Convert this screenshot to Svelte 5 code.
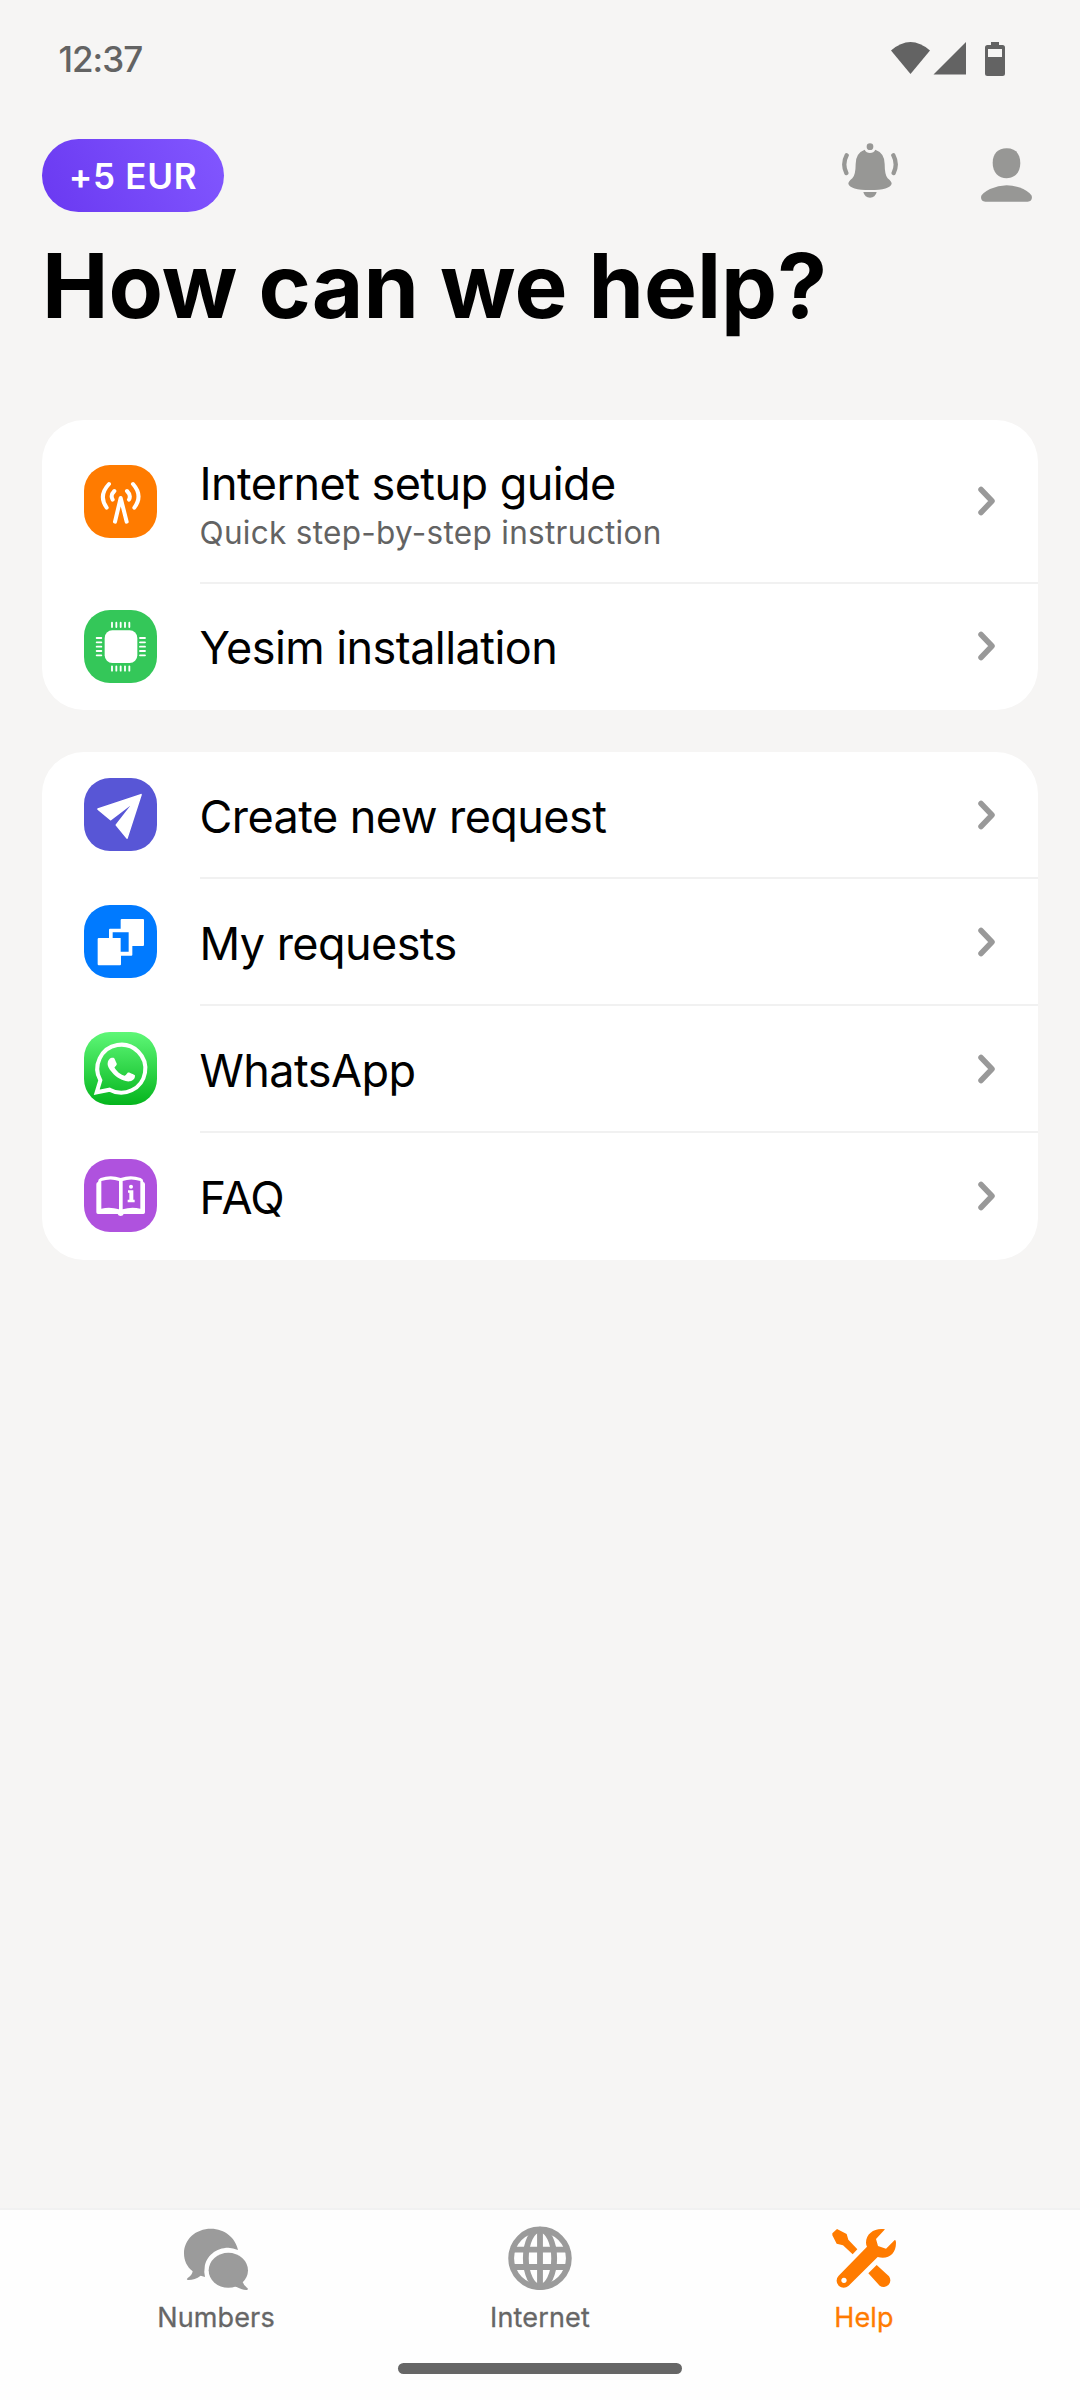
<script>
  const groups = [
    [
      { id: 'guide', title: 'Internet setup guide', note: 'Quick step-by-step instruction' },
      { id: 'chip', title: 'Yesim installation' }
    ],
    [
      { id: 'send', title: 'Create new request' },
      { id: 'requests', title: 'My requests' },
      { id: 'whatsapp', title: 'WhatsApp' },
      { id: 'faq', title: 'FAQ' }
    ]
  ];
  const pins = [84, 97, 110, 123, 136];
  const tabs = [
    { id: 'numbers', label: 'Numbers' },
    { id: 'internet', label: 'Internet' },
    { id: 'help', label: 'Help', active: true }
  ];
</script>

<div class="screen">
  <div class="status">
    <span class="clock">12:37</span>
    <svg class="signals" viewBox="0 0 116 36" aria-hidden="true">
      <path d="M0 9.5Q19.500-7.500 39 9.500L19.500 33Z" />
      <path d="M42.500 33.500L75 1V33.500Z" />
      <path fill-rule="evenodd" d="M100 1h8v3h3.500q2.500 0 2.500 2.500v26q0 2.500-2.500 2.500h-15q-2.500 0-2.500-2.500v-26Q94 4 96.500 4H100ZM97 8v8h14V8Z" />
    </svg>
  </div>

  <header>
    <button class="bonus">+5 EUR</button>
    <div class="actions">
      <svg class="bell" viewBox="0 0 180 180" aria-label="Notifications">
        <circle cx="90" cy="20" r="10" />
        <path d="M74 29A18 18 0 0 0 106 29Q134 39 134 72Q134 105 143 115Q155 125 155 131Q150 150 90 150Q30 150 25 131Q25 125 37 115Q47 105 47 72Q47 39 74 29Z" />
        <path d="M70 156H110Q106 173 90 173Q74 173 70 156Z" />
        <path class="wave" d="M20 46Q6 72 19 99M160 46Q174 72 161 99" />
      </svg>
      <svg class="person" viewBox="0 0 160 168" aria-label="Profile">
        <path d="M80 4C106 4 121 20 121 48C121 76 104 94 80 94C56 94 38 76 38 48C38 20 54 4 80 4Z" />
        <path d="M3 150Q3 140 30 126Q55 115 80 115Q105 115 130 126Q156 140 156 150Q156 164 143 164H16Q3 164 3 150Z" />
      </svg>
    </div>
  </header>

  <h1>How can we help?</h1>

  <main>
    {#each groups as group}
      <section class="card">
        {#each group as item}
          <div class="row" class:tall={item.note}>
            <svg class="tile {item.id}" viewBox="0 0 219 219" aria-hidden="true">
              {#if item.id === 'guide'}
                <path class="line" d="M93 170L110 99L128 170M91 78Q78 91 86 104M129 78Q142 91 135 104M75 57Q42 92 68 128M147 57Q178 92 151 128" />
              {:else if item.id === 'chip'}
                <rect x="62" y="61" width="98" height="98" rx="23" />
                {#each pins as p}
                  <path class="pin" d="M{p} 38V51M{p} 169V182M38 {p}H52M168 {p}H183" />
                {/each}
              {:else if item.id === 'send'}
                <path class="soft" d="M171 50L42 93L80 125L153 69L97 141L129 180Z" />
              {:else if item.id === 'requests'}
                <rect x="110" y="42" width="70" height="81" rx="3" />
                <rect x="75" y="71" width="70" height="81" rx="3" />
                <rect x="41" y="99" width="70" height="82" rx="3" />
                <path class="cut" d="M86 82H134V140H110V99H86Z" />
              {:else if item.id === 'whatsapp'}
                <path class="ring" d="M38 181L49 145A72 72 0 1 1 77 173Z" />
                <path transform="translate(30 36.500) scale(6.800 6.350)" d="M17.472 14.382c-.297-.149-1.758-.867-2.030-.967-.273-.099-.471-.148-.670.150-.197.297-.767.966-.940 1.164-.173.199-.347.223-.644.075-.297-.150-1.255-.463-2.390-1.475-.883-.788-1.480-1.761-1.653-2.059-.173-.297-.018-.458.130-.606.134-.133.298-.347.446-.520.149-.174.198-.298.298-.497.099-.198.050-.371-.025-.520-.075-.149-.669-1.612-.916-2.207-.242-.579-.487-.500-.669-.510-.173-.008-.371-.010-.570-.010-.198 0-.520.074-.792.372-.272.297-1.040 1.016-1.040 2.479 0 1.462 1.065 2.875 1.213 3.074.149.198 2.096 3.200 5.077 4.487.709.306 1.262.489 1.694.625.712.227 1.360.195 1.871.118.571-.085 1.758-.719 2.006-1.413.248-.694.248-1.289.173-1.413-.074-.124-.272-.198-.570-.347z" />
              {:else}
                <path d="M37 76Q37 70 42 69Q42 60 50 57Q80 46 110 57Q140 46 170 57Q178 60 178 69Q183 70 183 76V160Q183 165 178 165H119Q117 171 110 171Q103 171 101 165H42Q37 165 37 160Z" />
                <path class="cut" d="M52 66Q80 57 105 66V151Q78 142 52 149ZM116 66Q141 57 169 66V149Q142 142 116 151Z" />
                <circle cx="141" cy="83" r="6" />
                <path d="M132 94H148V122H152V130H131V122H136V101H132Z" />
              {/if}
            </svg>
            <div class="body">
              <div class="text">
                <span class="title">{item.title}</span>
                {#if item.note}<span class="note">{item.note}</span>{/if}
              </div>
              <svg class="chevron" viewBox="0 0 18 30" aria-hidden="true"><path d="M3 3.500L14 15L3 26.500" /></svg>
            </div>
          </div>
        {/each}
      </section>
    {/each}
  </main>

  <footer>
    <nav>
      {#each tabs as tab}
        <div class="tab" class:active={tab.active}>
          <svg viewBox="0 0 198 198" aria-hidden="true">
            {#if tab.id === 'numbers'}
              <path d="M165 72C158 36 125 8 84 8C38 8 3 40 3 82C3 104 12 123 29 136Q27 148 14 156Q9 160 14 162Q34 163 53 149L66 153Q62 138 65 125C68 90 100 65 136 65Q150 66 165 72Z" />
              <ellipse cx="136" cy="133" rx="59" ry="52.500" />
              <path d="M156 181Q178 193 192 192Q197 190 193 186Q182 178 179 168Z" />
            {:else if tab.id === 'internet'}
              <g class="globe">
                <circle cx="99" cy="97" r="86.500" />
                <ellipse cx="99" cy="97" rx="42.500" ry="86" />
                <path d="M99 10V184M21 71H177M21 123H177" />
              </g>
            {:else}
              <path d="M4 22L18 9L47 24L52 41L79 70L65 85L36 58L17 53L4 28Z" />
              <path d="M137 117L174 151A20 20 0 0 1 146 179L112 142Z" />
              <path fill-rule="evenodd" d="M162 10C135 4 105 20 105 50Q105 56 108 62L23 149A21 21 0 0 0 53 179L140 93C170 102 195 85 195 50Q195 44 192 41L165 68L141 60L135 39ZM39 155A8 8 0 1 1 38.900 155Z" />
            {/if}
          </svg>
          <span>{tab.label}</span>
        </div>
      {/each}
    </nav>
    <div class="home"></div>
  </footer>
</div>

<style>
  :global(body) { background: #f6f5f4; }
  .screen {
    box-sizing: border-box;
    width: 1080px;
    height: 2400px;
    display: flex;
    flex-direction: column;
    background: #f6f5f4;
    color: #000;
    font-family: Inter, "Liberation Sans", sans-serif;
  }
  .status {
    height: 118px;
    box-sizing: border-box;
    padding: 0 73px 0 58.500px;
    display: flex;
    justify-content: space-between;
    align-items: center;
    color: #636363;
  }
  .clock { font-size: 35px; font-weight: 500; letter-spacing: -1px; }
  .signals { width: 116px; height: 36px; fill: #636363; }
  header {
    height: 94px;
    padding: 0 42px;
    display: flex;
    justify-content: space-between;
    align-items: flex-end;
  }
  .bonus {
    width: 182px;
    height: 73px;
    padding: 0;
    border: 0;
    border-radius: 37px;
    background: linear-gradient(60deg, #6a39f1, #8257ff);
    color: #fff;
    font: 600 35px Inter, sans-serif;
    letter-spacing: 0.7px;
  }
  .actions { display: flex; gap: 80px; align-self: flex-start; padding-top: 22px; }
  .bell { width: 60px; height: 60px; fill: #979795; }
  .wave { fill: none; stroke: #979795; stroke-width: 13; stroke-linecap: round; }
  .person { width: 53.300px; height: 56px; margin: 7px 4.700px 0 0; fill: #979795; }
  h1 { margin: 20px 42px 0; font-size: 89px; line-height: 108px; font-weight: 700; white-space: nowrap; }
  main { margin-top: 80px; padding: 0 42px; flex: 1; display: flex; flex-direction: column; gap: 42px; }
  .card { border-radius: 42px; background: #fff; overflow: hidden; }
  .row { height: 127px; padding-left: 42px; display: flex; align-items: center; gap: 42.500px; }
  .row.tall { height: 164px; }
  .row.tall + .row { height: 126px; }
  .tile { width: 73px; height: 73px; border-radius: 26px; fill: #fff; flex: none; margin-bottom: 2px; }
  .guide, .chip { margin-bottom: 1px; }
  .guide { background: #ff7b00; }
  .chip { background: #34c759; }
  .send { background: #5856d6; }
  .requests { background: #007aff; }
  .whatsapp { background: linear-gradient(#5ef777, #05b51d); }
  .faq { background: #af52de; }
  .line { fill: none; stroke: #fff; stroke-width: 12; stroke-linecap: round; stroke-linejoin: round; }
  .pin { stroke: #fff; stroke-width: 5.500; stroke-linecap: round; }
  .soft { stroke: #fff; stroke-width: 5; stroke-linejoin: round; }
  .ring { fill: none; stroke: #fff; stroke-width: 12; }
  .requests .cut { fill: #007aff; }
  .faq .cut { fill: #af52de; }
  .body {
    flex: 1;
    align-self: stretch;
    box-sizing: border-box;
    padding-right: 42px;
    display: flex;
    justify-content: space-between;
    align-items: center;
    border-bottom: 2px solid #f1f1f1;
  }
  .row:last-child .body { border-bottom-color: transparent; }
  .text { display: flex; flex-direction: column; }
  .title { font-size: 45px; line-height: 54px; padding-top: 4px; letter-spacing: -0.56px; }
  .tall .title { padding-top: 8px; }
  .note { font-size: 31.500px; line-height: 43px; color: #636363; letter-spacing: 0.3px; }
  .chevron { width: 18px; height: 30px; fill: none; stroke: #999; stroke-width: 5.500; stroke-linecap: round; stroke-linejoin: round; }
  footer { height: 192px; box-sizing: border-box; border-top: 2px solid #f1f1f1; background: #fefefe; display: flex; flex-direction: column; align-items: center; }
  nav { width: 972px; display: flex; padding-top: 16px; }
  .tab { flex: 1; display: flex; flex-direction: column; align-items: center; color: #666; font-size: 27px; line-height: 32px; font-weight: 400; letter-spacing: 0.15px; }
  .tab svg { width: 66px; height: 66px; fill: #9b9b9b; margin-bottom: 10px; }
  .tab span { -webkit-text-stroke: 0.3px currentColor; }
  .globe { fill: none; stroke: #9b9b9b; stroke-width: 17.500; }
  .tab.active { color: #ff7b00; }
  .tab.active svg { fill: #ff7b00; }
  .home { width: 284px; height: 11px; margin-top: 29px; border-radius: 6px; background: #666; }
</style>
